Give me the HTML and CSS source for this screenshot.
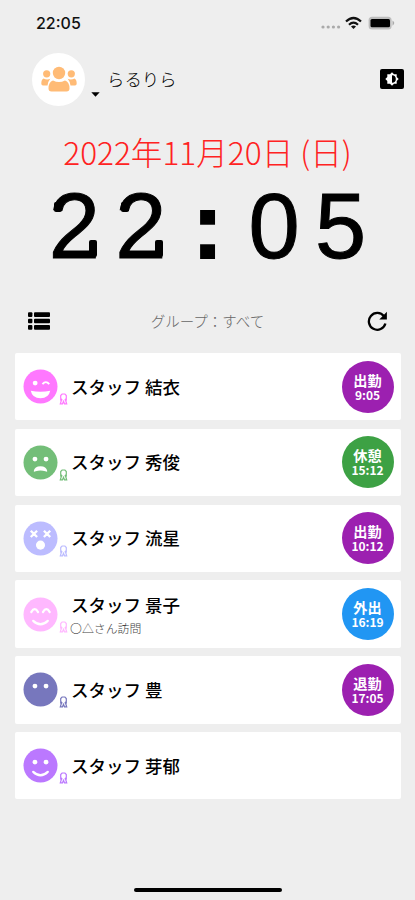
FILE: index.html
```html
<!DOCTYPE html>
<html lang="ja">
<head>
<meta charset="utf-8">
<title>タイムレコーダー</title>
<link rel="stylesheet" href="styles.css">
</head>
<body>
<svg class="defs" width="0" height="0" aria-hidden="true">
  <symbol id="ribbon" viewBox="0 0 8 12"><path d="M2.700 7.200 1.200 5.500V2.500L2.600 1H5.400L6.800 2.500V5.500L5.300 7.200M.5 6.900H2.900M5.100 6.900H7.500M2 7 .8 10.800H3L4 8.300 5 10.800H7.200L6 7" fill="none" stroke="currentColor" stroke-width="1.200"/></symbol>
</svg>
<div class="screen">
  <div class="status">
    <span class="status-time">22:05</span>
    <svg class="status-icons" width="76" height="16" viewBox="0 0 76 16">
      <g fill="#aaa"><circle cx="2" cy="12" r="1.6"/><circle cx="7.2" cy="12" r="1.6"/><circle cx="12.4" cy="12" r="1.6"/><circle cx="17.6" cy="12" r="1.6"/></g>
      <g transform="translate(-1 1)"><g fill="none" stroke="#111" stroke-width="2.2"><path d="M26 5.5Q33.500 -1.500 41 5.500"/><path d="M29 8.700Q33.500 4.500 38 8.700"/></g>
      <path d="M31 10.500Q33.500 8.500 36 10.500L33.500 13Z" fill="#111"/>
      <rect x="48.600" y=".8" width="23" height="12.800" rx="3.500" fill="#bdbdbd"/><rect x="50.500" y="3" width="19.500" height="8.200" rx="1.500"/><path d="M72.500 4.500Q76 7 72.500 9.700Z" fill="#aaa"/></g>
    </svg>
  </div>
  <header class="top">
    <div class="group-avatar">
      <svg width="36" height="26" viewBox="0 0 36 26" fill="#ffbb76"><circle cx="18" cy="7" r="6.200"/><circle cx="5.700" cy="7.800" r="3.600"/><circle cx="30.300" cy="7.800" r="3.600"/><path d="M12 14.500Q18 17.700 24 14.500Q28.500 16 28.500 22.500Q28.500 25.500 25.500 25.500H10.500Q7.500 25.500 7.500 22.500Q7.500 16 12 14.500Z"/><path d="M2.500 12.500Q6 14.300 9.300 12.800Q7 15.500 6.500 19.500H2Q.3 19.500.3 17.500Q.3 13.500 2.500 12.500ZM33.500 12.500Q30 14.300 26.700 12.800Q29 15.500 29.500 19.500H34Q35.700 19.500 35.700 17.500Q35.700 13.500 33.500 12.500Z"/></svg>
    </div>
    <svg class="caret" width="9" height="5" viewBox="0 0 9 5"><path d="M.3.300H8.700L4.500 4.700Z"/></svg>
    <span class="user">らるりら</span>
    <svg class="contrast" width="24" height="20" viewBox="0 0 24 20"><rect width="24" height="20" rx="2"/><path d="M12 3.300 14 5.300H16.700V8L18.700 10 16.700 12V14.700H14L12 16.700 10 14.700H7.300V12L5.300 10 7.300 8V5.300H10Z" fill="#fff"/><path d="M12 6.200a3.800 3.800 0 0 1 0 7.600Z"/></svg>
  </header>
  <div class="date">2022年11月20日 (日)</div>
  <div class="clock"><span class="two">2</span><span class="two">2</span><span class="colon">:</span><span>0</span><span>5</span></div>
  <div class="toolbar">
    <svg width="22" height="18" viewBox="0 0 22 18"><rect y=".3" width="4.400" height="4.600" rx="1"/><rect x="6" y=".3" width="16" height="4.600" rx="1"/><rect y="6.700" width="4.400" height="4.600" rx="1"/><rect x="6" y="6.700" width="16" height="4.600" rx="1"/><rect y="13.100" width="4.400" height="4.600" rx="1"/><rect x="6" y="13.100" width="16" height="4.600" rx="1"/></svg>
    <span class="filter">グループ：すべて</span>
    <svg width="20" height="20" viewBox="0 0 20 20"><path d="M17 5.300A8.400 8.400 0 1 0 18.400 12.500" fill="none" stroke="#000" stroke-width="2.300"/><path d="M19.900.8V8.400H12.300Z"/></svg>
  </div>
  <main class="list">
    <section class="card pink">
      <svg class="face" viewBox="0 0 36 36"><circle cx="18" cy="18" r="17.500" fill="currentColor"/><circle cx="12.500" cy="14.500" r="2.500" fill="#fff"/><path d="M20 15.500Q23.500 11.500 27 15.500" fill="none" stroke="#fff" stroke-width="2"/><path d="M8 22.300Q18 24.500 28 22.300Q26.500 30 18 30Q9.500 30 8 22.300Z" fill="#fff"/></svg>
      <svg class="ribbon"><use href="#ribbon"/></svg>
      <div class="info"><div class="name">スタッフ 結衣</div></div>
      <div class="badge purple"><b>出勤</b><span>9:05</span></div>
    </section>
    <section class="card green">
      <svg class="face" viewBox="0 0 36 36"><circle cx="18" cy="18" r="17.500" fill="currentColor"/><circle cx="12.300" cy="14.500" r="2.500" fill="#fff"/><circle cx="23.700" cy="14.500" r="2.500" fill="#fff"/><path d="M11 27Q12 21.800 18 21.800Q24 21.800 25 27Q24.500 28 23 27Q18 25.500 13 27Q11.500 28 11 27Z" fill="#fff"/></svg>
      <svg class="ribbon"><use href="#ribbon"/></svg>
      <div class="info"><div class="name">スタッフ 秀俊</div></div>
      <div class="badge rest"><b>休憩</b><span>15:12</span></div>
    </section>
    <section class="card lavender">
      <svg class="face" viewBox="0 0 36 36"><circle cx="18" cy="18" r="17.500" fill="currentColor"/><path d="M8 10 14.500 16.500M14.500 10 8 16.500M21.500 10 28 16.500M28 10 21.500 16.500" stroke="#fff" stroke-width="2.400"/><circle cx="18" cy="24.800" r="4.700" fill="#fff"/></svg>
      <svg class="ribbon"><use href="#ribbon"/></svg>
      <div class="info"><div class="name">スタッフ 流星</div></div>
      <div class="badge purple"><b>出勤</b><span>10:12</span></div>
    </section>
    <section class="card rose">
      <svg class="face" viewBox="0 0 36 36"><circle cx="18" cy="18" r="17.500" fill="currentColor"/><g fill="none" stroke="#fff" stroke-width="2.300" stroke-linecap="round"><path d="M8.500 15.500Q12 9.500 15.500 15.500M20.500 15.500Q24 9.500 27.500 15.500"/><path d="M10.500 24.500Q18 31.500 25.500 24.500"/></g></svg>
      <svg class="ribbon"><use href="#ribbon"/></svg>
      <div class="info"><div class="name">スタッフ 景子</div><div class="note">〇△さん訪問</div></div>
      <div class="badge blue"><b>外出</b><span>16:19</span></div>
    </section>
    <section class="card indigo">
      <svg class="face" viewBox="0 0 36 36"><circle cx="18" cy="18" r="17.500" fill="currentColor"/><circle cx="12.300" cy="14.500" r="2.500" fill="#fff"/><circle cx="23.700" cy="14.500" r="2.500" fill="#fff"/></svg>
      <svg class="ribbon"><use href="#ribbon"/></svg>
      <div class="info"><div class="name">スタッフ 豊</div></div>
      <div class="badge purple"><b>退勤</b><span>17:05</span></div>
    </section>
    <section class="card violet">
      <svg class="face" viewBox="0 0 36 36"><circle cx="18" cy="18" r="17.500" fill="currentColor"/><circle cx="12.300" cy="14.500" r="2.500" fill="#fff"/><circle cx="23.700" cy="14.500" r="2.500" fill="#fff"/><path d="M10.500 24.500Q18 31.500 25.500 24.500" fill="none" stroke="#fff" stroke-width="2.300" stroke-linecap="round"/></svg>
      <svg class="ribbon"><use href="#ribbon"/></svg>
      <div class="info"><div class="name">スタッフ 芽郁</div></div>
    </section>
  </main>
  <div class="home"></div>
</div>
</body>
</html>
```

FILE: styles.css
```css
* { box-sizing: border-box; }
body { margin: 0; background: #eee; color: #000; font-family: "Noto Sans CJK JP", sans-serif; }
.defs { display: none; }
svg { display: block; flex: none; }
.screen { width: 415px; height: 900px; display: flex; flex-direction: column; overflow: hidden; }
.status { height: 46px; flex: none; padding: 0 18px 0 36px; display: flex; align-items: center; justify-content: space-between; }
.status-time { font: 500 16px/20px Inter, sans-serif; color: #111; }
.top { height: 66px; flex: none; display: flex; align-items: center; padding: 0 11px 0 32px; }
.group-avatar { width: 53px; height: 53px; border-radius: 50%; background: #fff; display: flex; align-items: center; justify-content: center; }
.caret { margin: 31px 7px 0 6px; }
.user { font-size: 17.4px; line-height: 24px; font-weight: 300; }
.contrast { margin-left: auto; }
.date { height: 76px; flex: none; line-height: 78px; text-align: center; color: #f22; font-size: 31.6px; font-weight: 300; white-space: nowrap; }
.clock { height: 78px; flex: none; width: 333px; margin-left: 41px; display: grid; grid-template-columns: repeat(5, 1fr); font: 92px/77px "Liberation Sans", sans-serif; text-align: center; -webkit-text-stroke: 1px #000; }
.clock span { position: relative; }
.clock .colon { font-weight: 700; -webkit-text-stroke: 2px #000; }
.two::before, .two::after { content: ""; position: absolute; width: 8px; background: #000; border-radius: 2px; }
.two::before { left: 13px; top: 14px; height: 10px; }
.two::after { right: 11px; top: 52px; height: 17px; }
.toolbar { height: 87px; flex: none; padding: 22px 28px 0; display: flex; align-items: center; justify-content: space-between; }
.filter { font-size: 14.5px; line-height: 20px; font-weight: 300; color: #666; margin-right: 2px; }
.list { display: flex; flex-direction: column; gap: 8.4px; padding: 0 14px 0 14.5px; }
.card { height: 67.4px; background: #fff; border-radius: 2px; display: flex; align-items: center; padding: 0 7.5px 0 8px; }
.face { width: 35px; height: 35px; }
.ribbon { width: 9px; height: 12px; margin: 25px 0 0 1.5px; }
.info { flex: 1; margin-left: 3px; white-space: nowrap; }
.name { color: #000; font-size: 17.500px; line-height: 24px; font-weight: 500; }
.note { margin: 2px 0 -2px -1px; font-size: 11.900px; line-height: 18px; font-weight: 300; color: #444; }
.badge { width: 52px; height: 52px; border-radius: 50%; color: #fff; display: flex; flex-direction: column; align-items: center; justify-content: center; }
.badge b { font-size: 14.200px; line-height: 15px; font-weight: 700; }
.badge span { font-size: 12px; line-height: 13px; font-weight: 700; }
.purple { background: #9c20b0; }
.rest { background: #3da144; }
.blue { background: #2196f3; }
.pink { color: #ff78ff; }
.green { color: #73be78; }
.lavender { color: #bcbcff; }
.rose { color: #ffb8ff; }
.indigo { color: #7777bd; }
.violet { color: #bb78ff; }
.purple, .rest, .blue { color: #fff; }
.home { width: 148px; height: 4px; border-radius: 2px; background: #000; margin: auto auto 8px 134px; flex: none; }
```
